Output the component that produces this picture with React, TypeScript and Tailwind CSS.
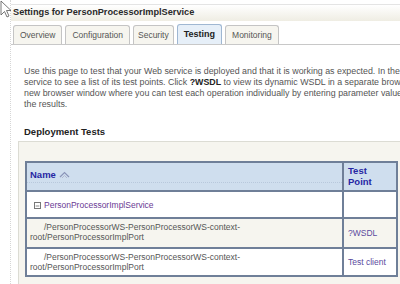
import { Minus } from 'lucide-react';

const tabs = ['Overview', 'Configuration', 'Security', 'Testing', 'Monitoring'];

const rows = [
  { port: 'PersonProcessorImplPort', link: '?WSDL' },
  { port: 'PersonProcessorImplPort', link: 'Test client' },
];

function Cursor() {
  return (
    <svg className="absolute left-0 top-0" width="14" height="20" viewBox="0 0 14 20">
      <path d="M1 1 L1 15 L4.5 11.5 L7 17 L9 16 L6.5 10.5 L11 10.5 Z" fill="#fff" stroke="#555" strokeWidth="0.8" />
    </svg>
  );
}

function SortIcon() {
  return (
    <svg width="11" height="8" viewBox="0 0 11 8" className="ml-[3px]">
      <path d="M1 6 L5.5 1.5 L10 6" fill="none" stroke="#8a94b8" strokeWidth="1.2" />
      <path d="M3 7 L5.5 4.5 L8 7" fill="none" stroke="#b0b8d0" strokeWidth="1" />
    </svg>
  );
}

export default function App() {
  return (
    <div className="relative w-[400px] h-[284px] overflow-hidden bg-white text-[#555] font-['Liberation_Sans',Arial,sans-serif] text-[8.5px]">
      <div className="ml-[10px] h-full border-l border-dotted border-[#d6d6d6] pt-[4px]">
        {/* title bar */}
        <div className="h-[17px] flex items-center pl-[2px] border-t border-[#e4e4e4] bg-gradient-to-b from-white to-[#efede3]">
          <span className="font-bold text-[9.2px] text-[#2a2a2a] leading-none">Settings for PersonProcessorImplService</span>
        </div>

        {/* tabs */}
        <div className="flex items-end gap-[3px] pl-[2px] mt-[4px] h-[20px] border-b border-[#c8c8c8]">
          {tabs.map(t =>
            t === 'Testing' ? (
              <div
                key={t}
                className="h-[20px] px-[6px] flex items-center rounded-t-[3px] border border-b-0 border-[#9fb7d2] bg-[#e6eff8] font-bold text-[#222] text-[9px]"
              >
                {t}
              </div>
            ) : (
              <div
                key={t}
                className={`h-[19px] ${t === 'Security' ? 'px-[4px]' : 'px-[6px]'} flex items-center rounded-t-[3px] border border-b-0 border-[#c4c4c4] bg-[#f6f5ef] text-[#555]`}
              >
                {t}
              </div>
            )
          )}
        </div>

        {/* description */}
        <div className="pl-[13px] pt-[21px] leading-[11px] whitespace-nowrap text-[8.85px]">
          <p>Use this page to test that your Web service is deployed and that it is working as expected. In the</p>
          <p>
            service to see a list of its test points. Click <b className="text-[#222]">?WSDL</b> to view its dynamic WSDL in a separate browser
          </p>
          <p>new browser window where you can test each operation individually by entering parameter values</p>
          <p>the results.</p>
        </div>

        <div className="pl-[13px] pt-[16px] pb-[4px] font-bold text-[9.5px] text-[#222] leading-[11px]">Deployment Tests</div>

        {/* panel */}
        <div className="ml-[7px] h-[200px] border-t border-l border-[#dcdcd4] bg-[#f6f5ef] pl-[6px] pt-[19px]">
          <div className="w-[373px] border-2 border-[#6f7f98] bg-white">
            <div className="flex h-[29px] bg-[#cfdeee] border-b-2 border-[#6f7f98]">
              <div className="flex-1 flex items-center pl-[3px] border-b border-dotted border-[#b8c8dc] mb-[7px] mt-[5px]">
                <span className="font-bold text-[9.5px] text-[#2727a3]">Name</span>
                <SortIcon />
              </div>
              <div className="w-[54px] border-l-2 border-[#6f7f98] pl-[4px] pt-[2px] font-bold text-[9.5px] text-[#2727a3] leading-[11px]">
                <div>Test</div>
                <div>Point</div>
              </div>
            </div>

            <div className="flex h-[27px] border-b-2 border-[#6f7f98]">
              <div className="flex-1 flex items-center pl-[7px] pt-[2px] text-[#6a3a94]">
                <span className="w-[7px] h-[7px] border border-[#777] flex items-center justify-center mr-[3px] bg-white">
                  <Minus size={6} strokeWidth={3} color="#444" />
                </span>
                PersonProcessorImplService
              </div>
              <div className="w-[54px] border-l-2 border-[#6f7f98]" />
            </div>

            {rows.map((r, i) => (
              <div
                key={i}
                className={`flex ${i === 0 ? 'h-[30px] border-b-2 border-[#6f7f98] bg-[#f6f5ef]' : 'h-[26px] bg-white'}`}
              >
                <div className="flex-1 pl-[3px] pt-[3px] leading-[10px] text-[#555]">
                  <div className="pl-[14px]">/PersonProcessorWS-PersonProcessorWS-context-</div>
                  <div>root/{r.port}</div>
                </div>
                <div className="w-[54px] border-l-2 border-[#6f7f98] pl-[4px] flex items-center text-[#5a4a9e]">{r.link}</div>
              </div>
            ))}
          </div>
        </div>
      </div>
      <Cursor />
    </div>
  );
}
